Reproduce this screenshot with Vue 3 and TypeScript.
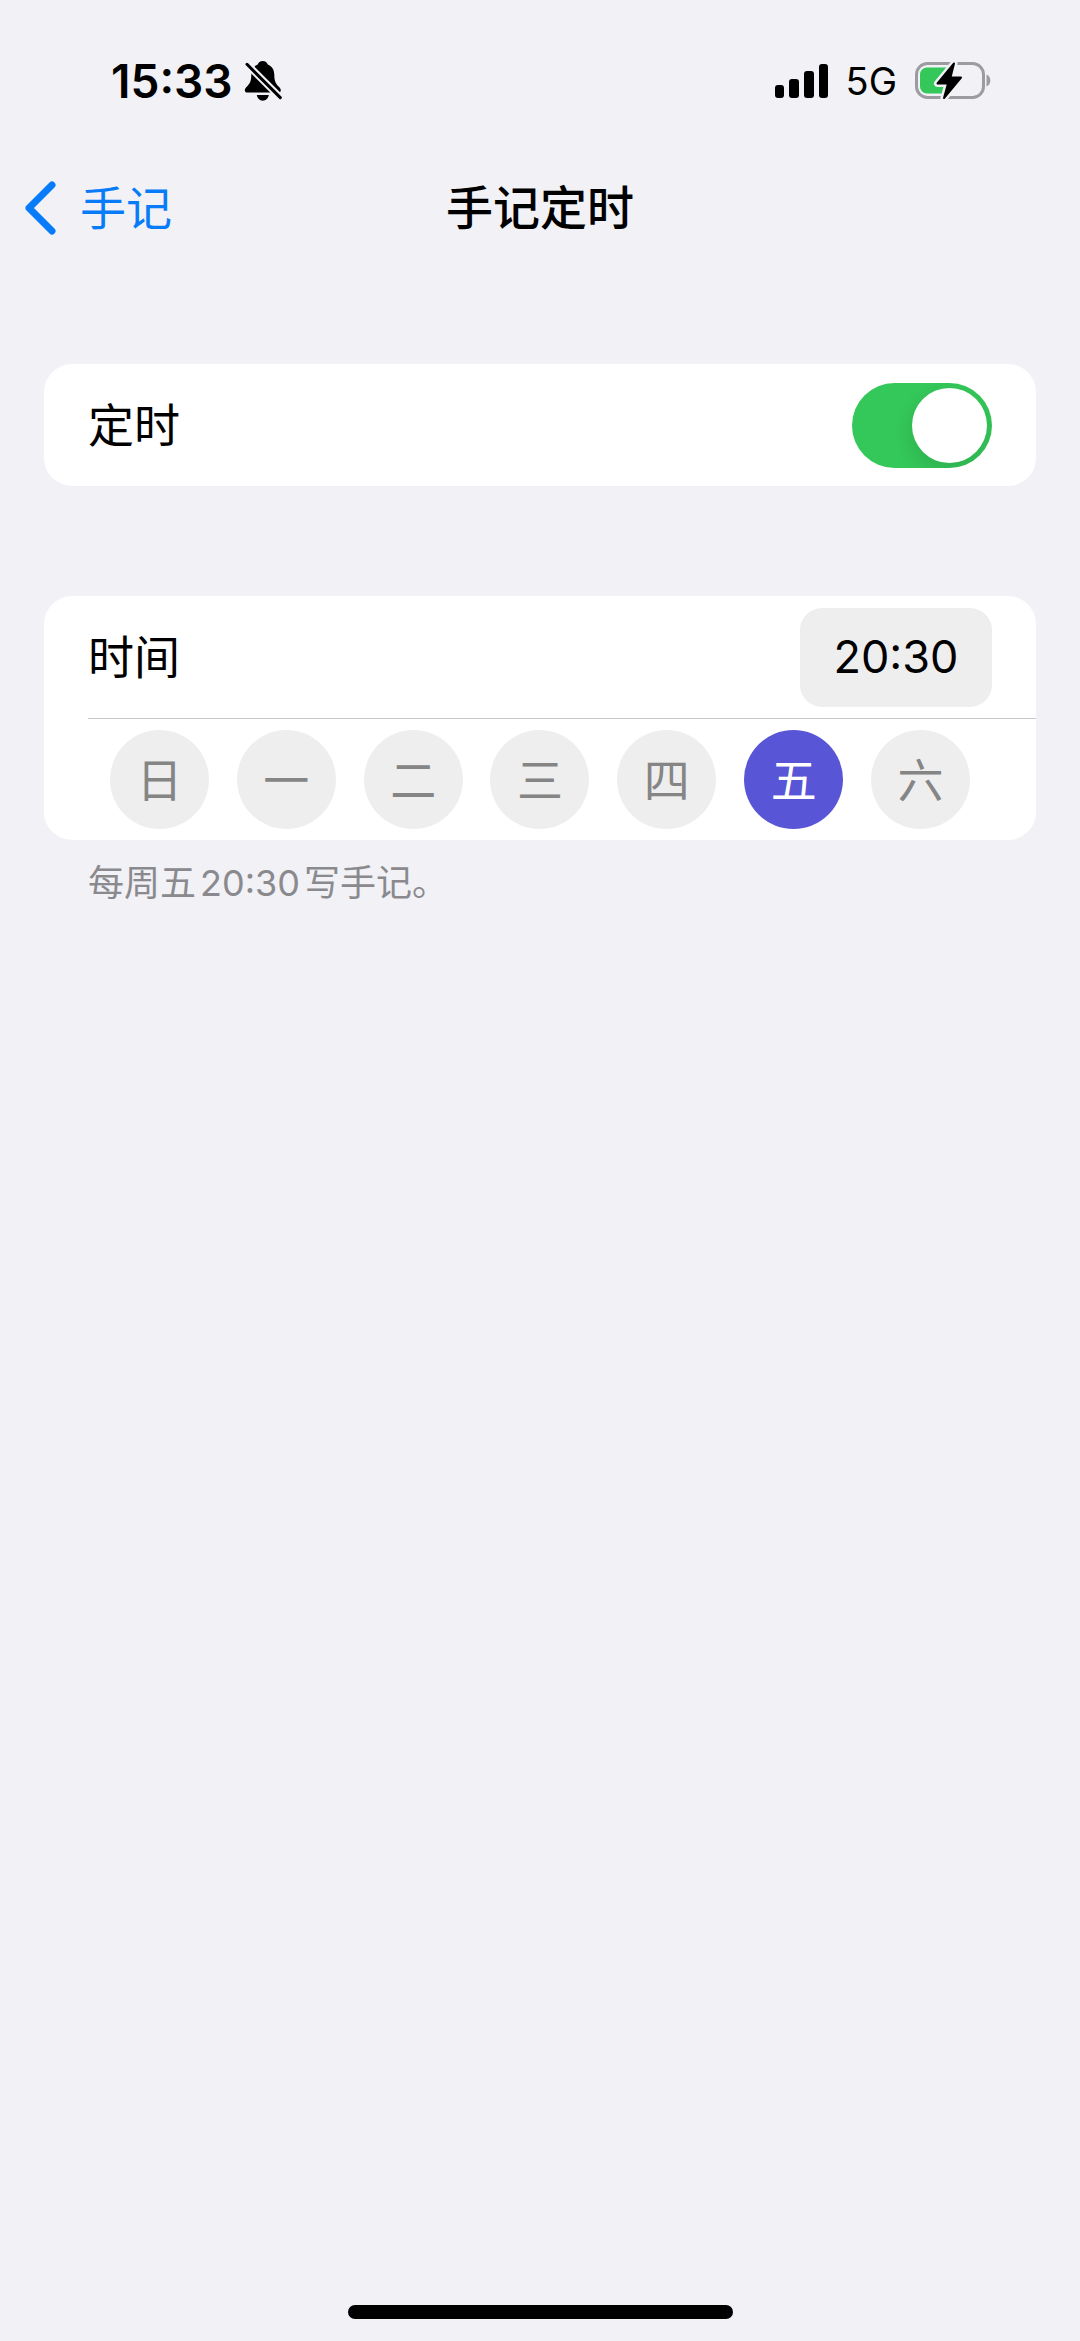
<script setup lang="ts">
import { computed, ref } from 'vue'

const enabled = ref(true)
const time = ref('20:30')
const days = ['日', '一', '二', '三', '四', '五', '六']
const selected = ref<number[]>([5])

const summary = computed(() => selected.value.map((i) => days[i]).join('、'))

function toggleDay(index: number) {
  selected.value = selected.value.includes(index)
    ? selected.value.filter((i) => i !== index)
    : [...selected.value, index].sort()
}
</script>

<template>
  <div class="screen">
    <div class="status">
      <div class="status-group">
        <span class="clock">15:33</span>
        <svg class="bell" width="44" height="44" viewBox="0 -1 44 44" aria-hidden="true">
          <path d="M21.7 1c-2.600 0-4.400 1.600-5 3.600C12.500 6.300 10.300 10 10.300 15c0 6-1.500 8.500-4.300 11.500C4.500 28 3.800 29 3.800 30.300c0 1.500 1 2.300 2.700 2.300h30.600c1.700 0 2.700-.8 2.700-2.300 0-1.300-.7-2.300-2.200-3.800-2.800-3-4.300-5.500-4.300-11.500 0-5-2.200-8.700-6.500-10.400-.6-2-2.500-3.600-5.100-3.600z" />
          <path d="M15.800 35h12c-.6 3.400-2.800 5.700-6 5.700s-5.400-2.300-6-5.700z" />
          <path class="bell-gap" d="M3 1.300L42 40.300" />
          <path class="bell-slash" d="M6 4.300L39.300 37.600" />
        </svg>
      </div>
      <div class="status-group">
        <svg class="signal" width="54" height="36" viewBox="0 0 54 36" aria-hidden="true">
          <rect x="0" y="22" width="9" height="13" rx="3" />
          <rect x="14" y="16" width="10" height="19" rx="3" />
          <rect x="29" y="8" width="10" height="27" rx="3" />
          <rect x="44" y="1" width="9" height="34" rx="3" />
        </svg>
        <span class="network">5G</span>
        <svg class="battery" width="77" height="40" viewBox="0 1 77 40" aria-hidden="true">
          <rect class="battery-shell" x="1.500" y="3.500" width="67" height="34" rx="11" />
          <path class="battery-cap" d="M71.500 14.500c2.500 1 3.800 3.200 3.800 6s-1.300 5-3.800 6z" />
          <path class="battery-level" d="M12 7.500h23v26H12a7 7 0 0 1-7-7v-12a7 7 0 0 1 7-7z" />
          <path class="bolt-gap" d="M39 3.500L22.500 23.500H33L29 38L46 17.500H35.500z" />
          <path class="bolt" d="M39 3.500L22.500 23.500H33L29 38L46 17.500H35.500z" />
        </svg>
      </div>
    </div>

    <header class="nav">
      <a class="back" href="#">
        <svg width="32" height="56" viewBox="0 0 32 56" aria-hidden="true">
          <path d="M28 5L5 28L28 51" />
        </svg>
        <span>手记</span>
      </a>
      <h1>手记定时</h1>
    </header>

    <main>
      <section class="card">
        <div class="row">
          <label for="schedule">定时</label>
          <input id="schedule" v-model="enabled" class="switch" type="checkbox" role="switch" />
        </div>
      </section>

      <section class="card">
        <div class="row">
          <span id="time-label">时间</span>
          <button class="time" type="button" aria-describedby="time-label">{{ time }}</button>
        </div>
        <div class="days">
          <button
            v-for="(day, index) in days"
            :key="day"
            class="day"
            :class="{ active: selected.includes(index) }"
            type="button"
            :aria-pressed="selected.includes(index)"
            @click="toggleDay(index)"
          >{{ day }}</button>
        </div>
      </section>
      <p class="note"><span>每周{{ summary }}</span><span>{{ time }}</span><span>写手记。</span></p>
    </main>

    <div class="home"></div>
  </div>
</template>

<style>
body {
  margin: 0;
  background: #f1f1f6;
}
</style>

<style scoped>
.screen {
  box-sizing: border-box;
  display: flex;
  flex-direction: column;
  min-height: 100vh;
  padding-bottom: 22px;
  background: #f1f1f6;
  color: #000;
  font-family: Inter, "Noto Sans CJK SC", sans-serif;
  font-size: 46px;
  line-height: 62px;
}

.status {
  display: flex;
  align-items: center;
  justify-content: space-between;
  height: 162px;
  padding: 0 88px 0 111px;
}

.status-group {
  display: flex;
  align-items: center;
}

.clock {
  font-weight: 600;
}

.bell {
  margin-left: 8px;
}

.bell-gap {
  stroke: #f1f1f6;
  stroke-width: 7;
}

.bell-slash {
  stroke: #000;
  stroke-width: 3;
  stroke-linecap: round;
}

.network {
  margin: 0 18px 0 17px;
  font-size: 38px;
}

.battery-shell {
  fill: none;
  stroke: #9c9ca0;
  stroke-width: 3;
}

.battery-cap {
  fill: #9c9ca0;
}

.battery-level {
  fill: #34c759;
}

.bolt-gap {
  fill: #f1f1f6;
  stroke: #f1f1f6;
  stroke-width: 7;
  stroke-linejoin: round;
}

.bolt {
  stroke: #000;
  stroke-width: 2;
  stroke-linejoin: round;
}

.nav {
  display: grid;
  grid-template-columns: 1fr auto 1fr;
  align-items: center;
  height: 92px;
  padding: 0 24px;
}

.back {
  display: flex;
  align-items: center;
  gap: 24px;
  color: #087cf8;
  text-decoration: none;
}

.back path {
  fill: none;
  stroke: #087cf8;
  stroke-width: 7;
  stroke-linecap: round;
  stroke-linejoin: round;
}

h1 {
  margin: 0;
  font-size: 47px;
  font-weight: 500;
}

main {
  padding: 0 44px;
}

.card {
  margin-top: 110px;
  border-radius: 28px;
  background: #fff;
}

.row {
  display: flex;
  align-items: center;
  justify-content: space-between;
  height: 122px;
  padding: 0 44px;
}

.switch {
  appearance: none;
  display: flex;
  width: 140px;
  height: 85px;
  margin: 0;
  padding: 5px;
  box-sizing: border-box;
  border-radius: 43px;
  background: #e9e9eb;
  overflow: hidden;
}

.switch::before {
  content: "";
  width: 75px;
  height: 75px;
  border-radius: 50%;
  background: #fff;
  box-shadow: 0 8px 20px rgba(0, 0, 0, 0.12);
}

.switch:checked {
  justify-content: flex-end;
  background: #34c759;
}

button {
  padding: 0;
  border: 0;
  background: #eeeeef;
  font: inherit;
}

.time {
  width: 192px;
  height: 99px;
  border-radius: 22px;
  color: #000;
  font-size: 45px;
}

.days {
  display: flex;
  align-items: center;
  justify-content: space-between;
  height: 121px;
  margin-left: 44px;
  padding: 0 66px 0 22px;
  border-top: 1px solid #c8c8ca;
}

.day {
  width: 99px;
  height: 99px;
  border-radius: 50%;
  color: #858585;
}

.day.active {
  background: #5856d6;
  color: #fff;
}

.note {
  display: flex;
  gap: 4px;
  margin: 18px 44px 0;
  color: #8a8a8e;
  font-size: 36px;
  line-height: 50px;
}

.home {
  align-self: center;
  width: 385px;
  height: 14px;
  margin-top: auto;
  border-radius: 7px;
  background: #000;
}
</style>
